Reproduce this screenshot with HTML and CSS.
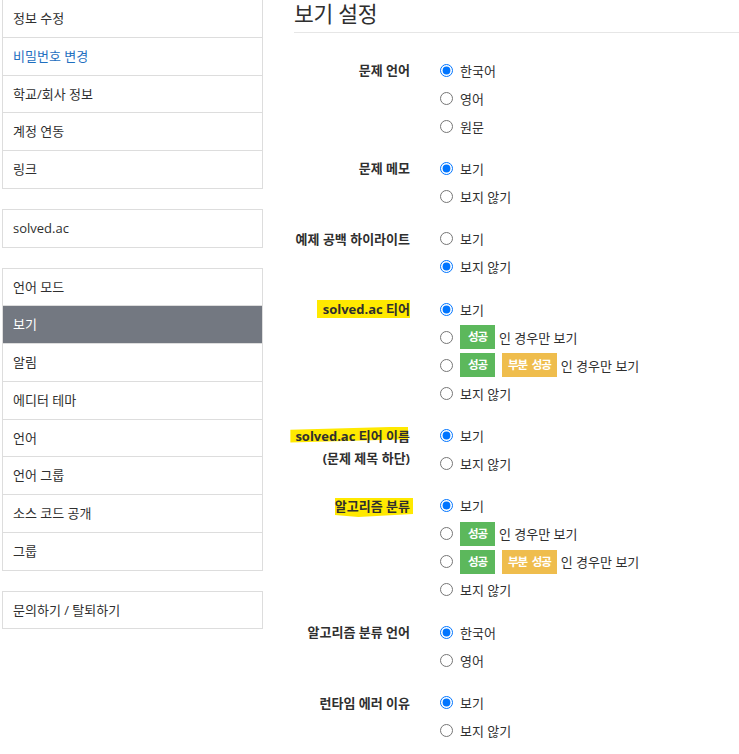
FILE: index.html
```html
<!DOCTYPE html>
<html lang="ko">
<head>
<meta charset="utf-8">
<title>보기 설정</title>
<link rel="stylesheet" href="styles.css">
</head>
<body>
<div class="page">
  <aside class="sidebar">
    <ul class="list list-first">
      <li class="item">정보 수정</li>
      <li class="item link">비밀번호 변경</li>
      <li class="item">학교/회사 정보</li>
      <li class="item">계정 연동</li>
      <li class="item">링크</li>
    </ul>
    <ul class="list">
      <li class="item">solved.ac</li>
    </ul>
    <ul class="list">
      <li class="item">언어 모드</li>
      <li class="item active">보기</li>
      <li class="item">알림</li>
      <li class="item">에디터 테마</li>
      <li class="item">언어</li>
      <li class="item">언어 그룹</li>
      <li class="item">소스 코드 공개</li>
      <li class="item">그룹</li>
    </ul>
    <ul class="list">
      <li class="item">문의하기 / 탈퇴하기</li>
    </ul>
  </aside>
  <main class="content">
    <h3 class="title">보기 설정</h3>
    <form class="form">
      <div class="row">
        <div class="label">문제 언어</div>
        <div class="options">
          <label class="opt"><input type="radio" name="a" checked><span>한국어</span></label>
          <label class="opt"><input type="radio" name="a"><span>영어</span></label>
          <label class="opt"><input type="radio" name="a"><span>원문</span></label>
        </div>
      </div>
      <div class="row">
        <div class="label">문제 메모</div>
        <div class="options">
          <label class="opt"><input type="radio" name="b" checked><span>보기</span></label>
          <label class="opt"><input type="radio" name="b"><span>보지 않기</span></label>
        </div>
      </div>
      <div class="row">
        <div class="label">예제 공백 하이라이트</div>
        <div class="options">
          <label class="opt"><input type="radio" name="c"><span>보기</span></label>
          <label class="opt"><input type="radio" name="c" checked><span>보지 않기</span></label>
        </div>
      </div>
      <div class="row">
        <div class="label"><span class="mark mark-1">solved.ac 티어</span></div>
        <div class="options">
          <label class="opt"><input type="radio" name="d" checked><span>보기</span></label>
          <label class="opt"><input type="radio" name="d"><span class="badge ok">성공</span><span>인 경우만 보기</span></label>
          <label class="opt"><input type="radio" name="d"><span class="badge ok">성공</span><span class="badge part">부분 성공</span><span>인 경우만 보기</span></label>
          <label class="opt"><input type="radio" name="d"><span>보지 않기</span></label>
        </div>
      </div>
      <div class="row">
        <div class="label"><span class="mark mark-2">solved.ac 티어 이름</span><br>(문제 제목 하단)</div>
        <div class="options">
          <label class="opt"><input type="radio" name="e" checked><span>보기</span></label>
          <label class="opt"><input type="radio" name="e"><span>보지 않기</span></label>
        </div>
      </div>
      <div class="row">
        <div class="label"><span class="mark mark-3">알고리즘 분류</span></div>
        <div class="options">
          <label class="opt"><input type="radio" name="f" checked><span>보기</span></label>
          <label class="opt"><input type="radio" name="f"><span class="badge ok">성공</span><span>인 경우만 보기</span></label>
          <label class="opt"><input type="radio" name="f"><span class="badge ok">성공</span><span class="badge part">부분 성공</span><span>인 경우만 보기</span></label>
          <label class="opt"><input type="radio" name="f"><span>보지 않기</span></label>
        </div>
      </div>
      <div class="row">
        <div class="label">알고리즘 분류 언어</div>
        <div class="options">
          <label class="opt"><input type="radio" name="g" checked><span>한국어</span></label>
          <label class="opt"><input type="radio" name="g"><span>영어</span></label>
        </div>
      </div>
      <div class="row">
        <div class="label">런타임 에러 이유</div>
        <div class="options">
          <label class="opt"><input type="radio" name="h" checked><span>보기</span></label>
          <label class="opt"><input type="radio" name="h"><span>보지 않기</span></label>
        </div>
      </div>
    </form>
  </main>
</div>
</body>
</html>
```

FILE: styles.css
```css
* { box-sizing: border-box; }

html, body {
  margin: 0;
  padding: 0;
  background: #fff;
}

body {
  font-family: "Open Sans", "Noto Sans CJK KR", sans-serif;
  font-size: 13px;
  color: #2f2f2f;
  overflow: hidden;
}

.page {
  display: flex;
  align-items: flex-start;
  width: 760px;
}

.sidebar {
  width: 261px;
  margin-left: 2px;
  flex: none;
}

.list {
  list-style: none;
  margin: 0 0 20px;
  padding: 0;
  border: 1px solid #ddd;
}

.list-first {
  margin-top: -1px;
}

.item {
  padding: 9px 10px;
  line-height: 18.75px;
  border-top: 1px solid #ddd;
}

.item:first-child {
  border-top: 0;
}

.item.link {
  color: #1f6fbf;
}

.item.active {
  background: #737881;
  color: #fff;
}

.content {
  margin-left: 31px;
  flex: 1;
}

.title {
  margin: 0;
  font-size: 21.5px;
  font-weight: normal;
  line-height: 26px;
  padding-top: 1px;
  padding-bottom: 5px;
  border-bottom: 1px solid #e6e6e6;
  letter-spacing: -0.3px;
}

.form {
  margin-top: 23px;
  margin-left: -6px;
}

.row {
  display: flex;
  margin-bottom: 14.4px;
}

.label {
  width: 122px;
  flex: none;
  text-align: right;
  font-weight: bold;
  line-height: 22px;
  padding-top: 3px;
  white-space: nowrap;
}

.options {
  margin-left: 30px;
  display: flex;
  flex-direction: column;
}

.opt {
  display: flex;
  align-items: center;
  height: 28px;
  white-space: nowrap;
}

.opt input {
  width: 13px;
  height: 13px;
  margin: 0 7px 0 0;
  flex: none;
}

.badge {
  display: inline-block;
  height: 24px;
  line-height: 24px;
  padding: 0 8px;
  color: #fff;
  font-weight: bold;
  font-size: 11.5px;
  letter-spacing: -1.1px;
  word-spacing: 3px;
  margin-right: 4px;
}

.badge.ok {
  background: #5cb85c;
}

.badge.part {
  background: #efbd4d;
  margin-left: 3px;
  padding: 0 6px;
}

.mark {
  position: relative;
  z-index: 0;
}

.mark::before {
  content: "";
  position: absolute;
  z-index: -1;
  background: #ffe900;
}

.mark-1::before {
  left: -6px;
  right: 0;
  top: 0;
  bottom: 0;
}

.mark-2::before {
  left: -5px;
  right: 2px;
  top: 0;
  bottom: 2px;
  clip-path: polygon(0 20%, 100% 0, 100% 80%, 0 100%);
}

.mark-3::before {
  left: 0;
  right: -3px;
  top: 1px;
  bottom: -2px;
  clip-path: polygon(0 0, 100% 0, 100% 85%, 30% 100%, 0 90%);
}
```
